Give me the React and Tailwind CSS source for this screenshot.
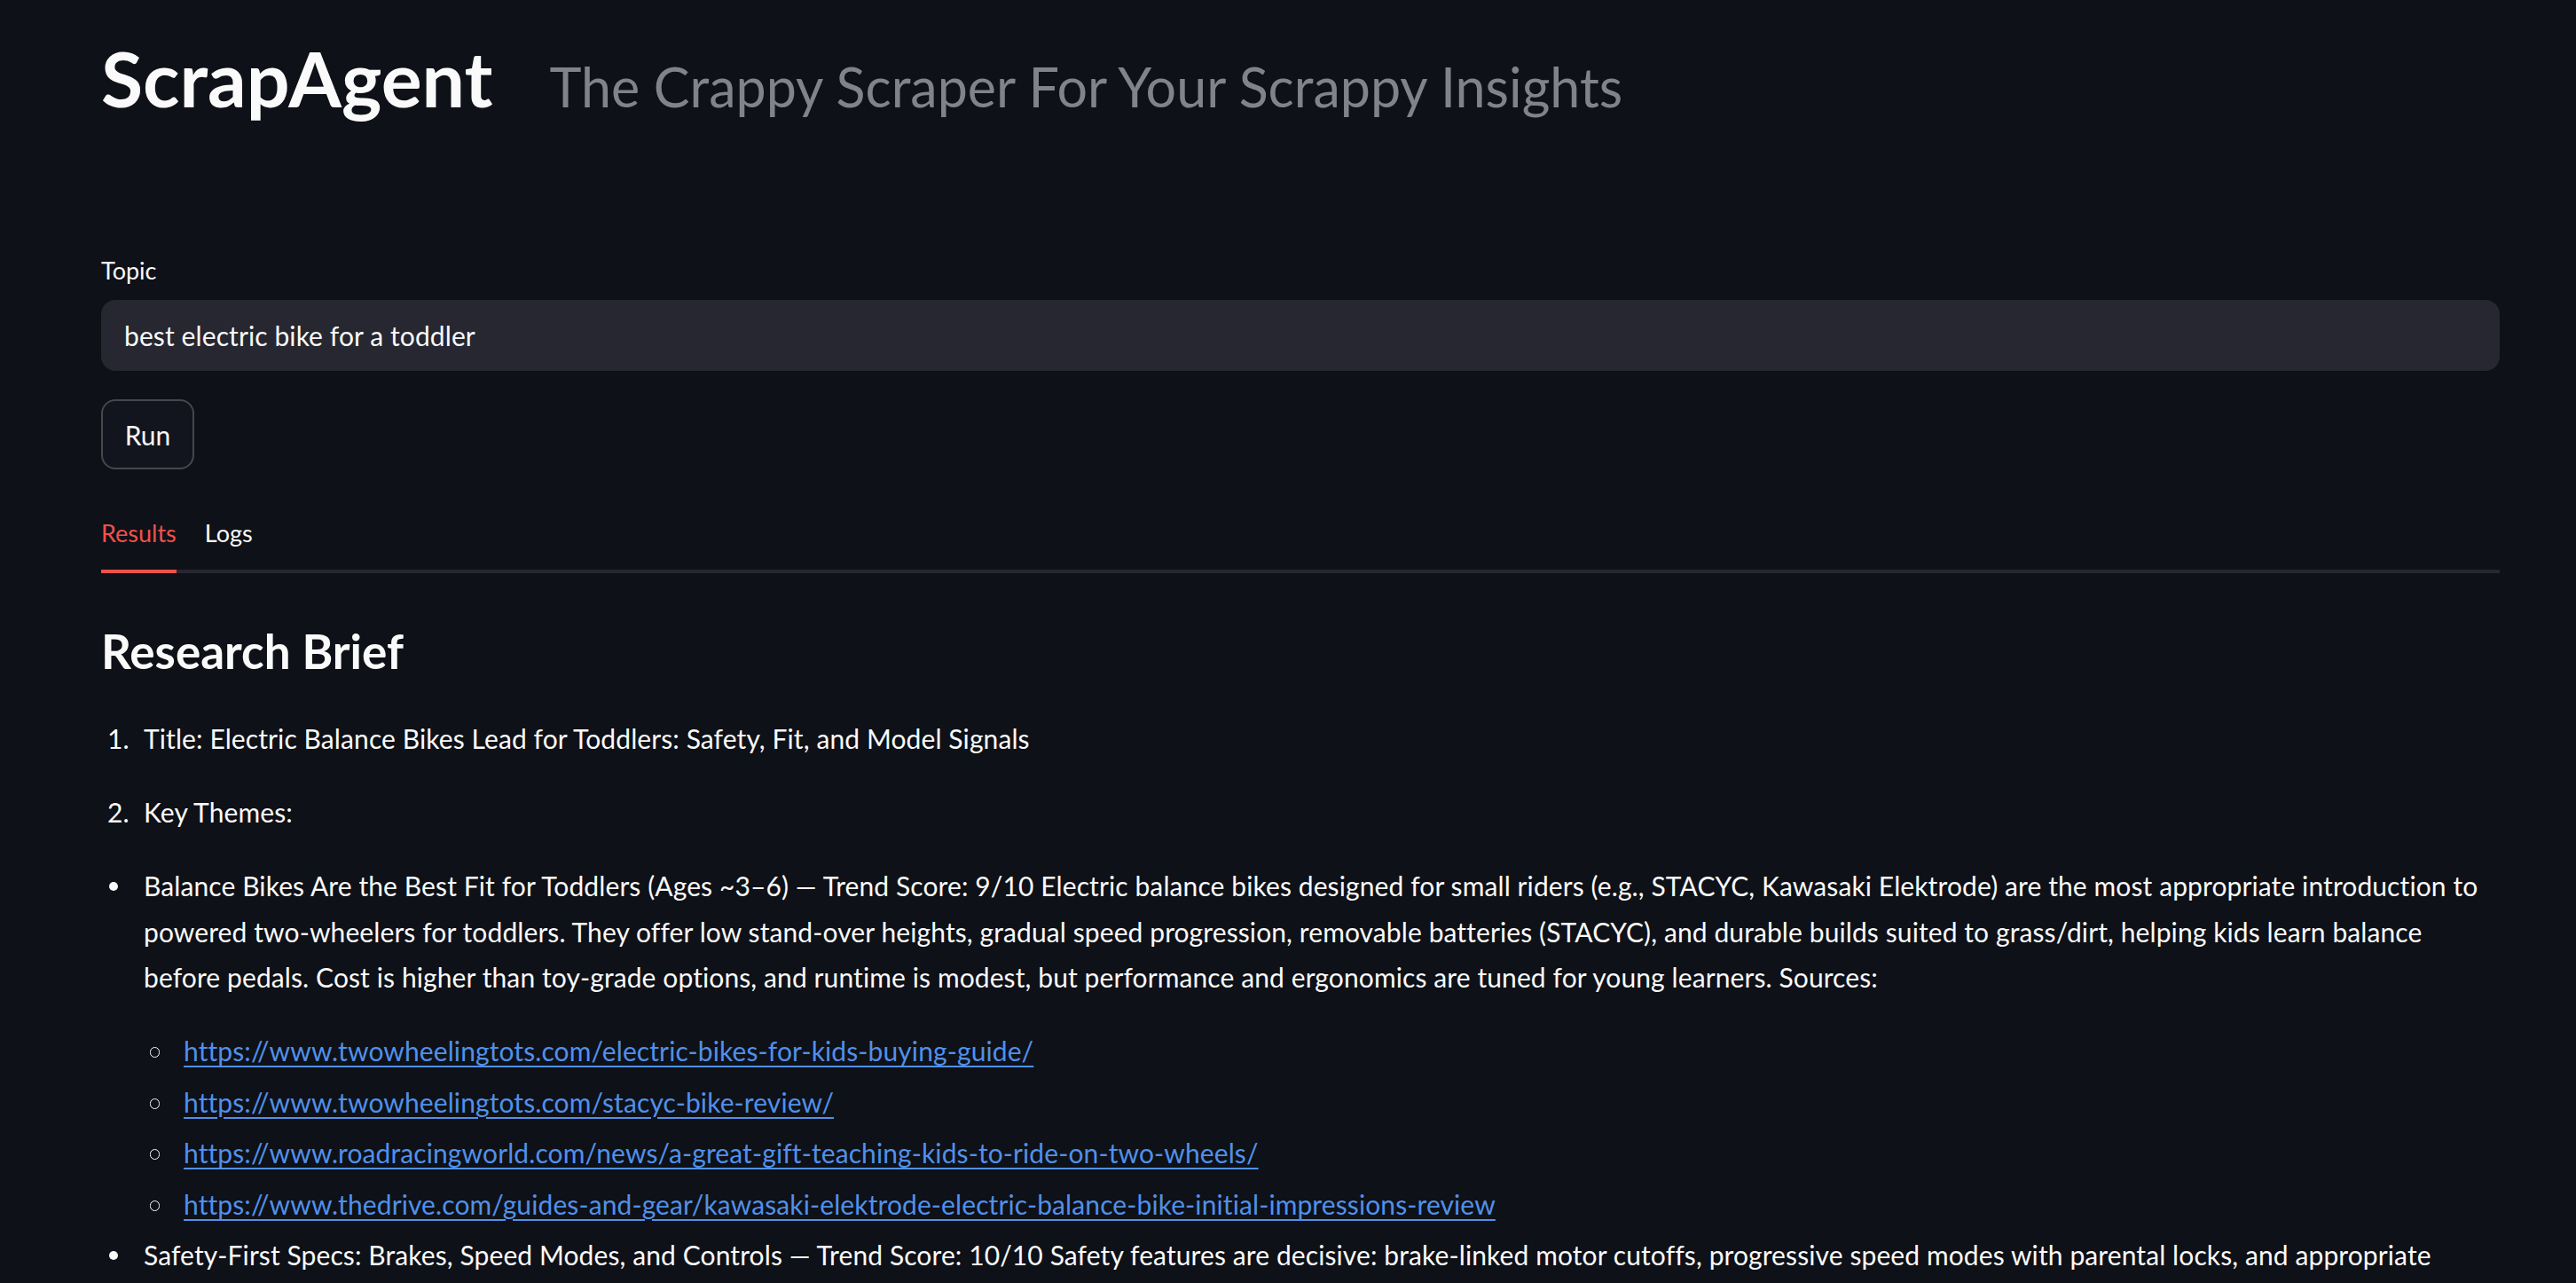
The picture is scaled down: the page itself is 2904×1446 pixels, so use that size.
import React from "react";

const links = [
  "https://www.twowheelingtots.com/electric-bikes-for-kids-buying-guide/",
  "https://www.twowheelingtots.com/stacyc-bike-review/",
  "https://www.roadracingworld.com/news/a-great-gift-teaching-kids-to-ride-on-two-wheels/",
  "https://www.thedrive.com/guides-and-gear/kawasaki-elektrode-electric-balance-bike-initial-impressions-review",
];

function NumItem({ n, children, className = "" }) {
  return (
    <li className={"flex " + className}>
      <div className="w-[48px] shrink-0 pl-[7px]">{n}.</div>
      <div className="min-w-0 flex-1">{children}</div>
    </li>
  );
}

function DiscItem({ children, className = "" }) {
  return (
    <li className={"flex " + className}>
      <div className="w-[48px] shrink-0 pl-[9px] pt-[21px]">
        <div className="h-[10px] w-[10px] rounded-full bg-[#fafafa]" />
      </div>
      <div className="min-w-0 flex-1">{children}</div>
    </li>
  );
}

function CircleItem({ children, className = "" }) {
  return (
    <li className={"flex " + className}>
      <div className="w-[45px] shrink-0 pl-[7px] pt-[21px]">
        <div className="h-[12px] w-[11px] rounded-full border-[1.5px] border-[#fafafa]" />
      </div>
      <div className="min-w-0 flex-1">{children}</div>
    </li>
  );
}

export default function App() {
  return (
    <div
      className="h-[1446px] w-full overflow-hidden bg-[#0e1117] text-[#fafafa]"
      style={{ fontFamily: "Lato, 'Noto Sans', sans-serif" }}
    >
      <div className="pl-[114px] pr-[86px] pt-[39px]">
        {/* Header */}
        <div className="flex items-baseline gap-[64px]">
          <h1 className="text-[86px] leading-[98px] font-bold text-[#fafafa]">ScrapAgent</h1>
          <div className="text-[61px] leading-[98px] text-[#828388]">
            The Crappy Scraper For Your Scrappy Insights
          </div>
        </div>

        {/* Topic input */}
        <div className="mt-[140px] text-[27px] leading-[36px]">Topic</div>
        <div className="mt-[15px] flex h-[80px] items-center rounded-[16px] bg-[#262730] px-[26px] text-[30px] leading-[36px] tracking-[0.1px]">
          best electric bike for a toddler
        </div>

        {/* Run button */}
        <div className="mt-[32px] flex">
          <button className="flex h-[79px] w-[105px] items-center justify-center rounded-[16px] border-2 border-[#45474e] bg-[#12151d] text-[30px] leading-[36px] text-[#fafafa]">
            Run
          </button>
        </div>

        {/* Tabs */}
        <div className="mt-[54px] flex gap-[32px] border-b-4 border-[#262730] text-[27px] leading-[36px]">
          <div className="-mb-[4px] border-b-4 border-[#ef514c] pb-[23px] text-[#ef514c]">Results</div>
          <div className="pb-[23px] text-[#fafafa]">Logs</div>
        </div>

        {/* Research Brief */}
        <h3 className="mt-[57px] text-[53px] leading-[62px] font-bold">Research Brief</h3>

        <div className="text-[30px] leading-[51.2px] tracking-[0.1px]">
          <ol className="mt-[42px]">
            <NumItem n={1}>Title: Electric Balance Bikes Lead for Toddlers: Safety, Fit, and Model Signals</NumItem>
            <NumItem n={2} className="mt-[32px]">
              Key Themes:
            </NumItem>
          </ol>

          <ul className="mt-[32px]">
            <DiscItem>
              Balance Bikes Are the Best Fit for Toddlers (Ages ~3–6) — Trend Score: 9/10 Electric balance bikes
              designed for small riders (e.g., STACYC, Kawasaki Elektrode) are the most appropriate introduction to
              <br />
              powered two-wheelers for toddlers. They offer low stand-over heights, gradual speed progression,
              removable batteries (STACYC), and durable builds suited to grass/dirt, helping kids learn balance
              <br />
              before pedals. Cost is higher than toy-grade options, and runtime is modest, but performance and
              ergonomics are tuned for young learners. Sources:
              <ul className="mt-[32px]">
                {links.map((l, i) => (
                  <CircleItem key={l} className={i === 0 ? "" : "mt-[6.4px]"}>
                    <a href="#" className="text-[#5190ea] underline decoration-2 underline-offset-[5px]">
                      {l}
                    </a>
                  </CircleItem>
                ))}
              </ul>
            </DiscItem>
            <DiscItem className="mt-[6.4px]">
              Safety-First Specs: Brakes, Speed Modes, and Controls — Trend Score: 10/10 Safety features are
              decisive: brake-linked motor cutoffs, progressive speed modes with parental locks, and appropriate
              <br />
              throttle response matter more than top speed for toddlers. Sources:
            </DiscItem>
          </ul>
        </div>
      </div>
    </div>
  );
}
